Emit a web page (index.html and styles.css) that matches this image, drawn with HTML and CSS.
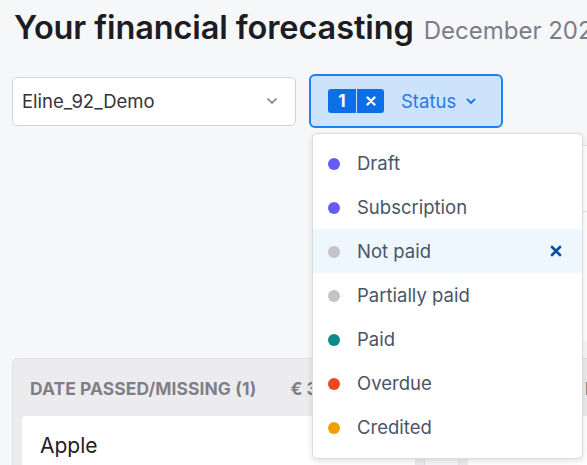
FILE: index.html
```html
<!DOCTYPE html>
<html lang="en">
<head>
<meta charset="utf-8">
<title>Financial forecasting</title>
<link rel="stylesheet" href="styles.css">
</head>
<body>
<div class="page">
  <header class="header">
    <h1 class="title">Your financial forecasting</h1>
    <span class="period">December 2023</span>
  </header>

  <div class="filters">
    <div class="select">
      <span class="select-text">Eline_92_Demo</span>
      <svg class="chev-gray" width="12" height="8" viewBox="0 0 12 8"><path d="M2 2l4 4 4-4" fill="none" stroke="#9a9aa3" stroke-width="2" stroke-linecap="round" stroke-linejoin="round"/></svg>
    </div>
    <div class="status-wrap">
      <button class="status-btn">
        <span class="badge"><span class="badge-num">1</span><span class="badge-x"><svg width="10" height="10" viewBox="0 0 10 10"><path d="M1.5 1.5l7 7M8.5 1.5l-7 7" stroke="#fff" stroke-width="2.4" stroke-linecap="round"/></svg></span></span>
        <span class="status-label">Status</span>
        <svg class="chev-blue" width="10" height="7" viewBox="0 0 10 7"><path d="M1.5 1.5l3.5 3.5 3.5-3.5" fill="none" stroke="#1f7ae8" stroke-width="2" stroke-linecap="round" stroke-linejoin="round"/></svg>
      </button>
      <ul class="menu">
        <li class="item"><span class="dot dot-purple"></span><span class="item-text">Draft</span></li>
        <li class="item"><span class="dot dot-purple"></span><span class="item-text">Subscription</span></li>
        <li class="item item-active"><span class="dot dot-gray"></span><span class="item-text">Not paid</span>
          <svg class="item-x" width="12" height="12" viewBox="0 0 12 12"><path d="M2 2l8 8M10 2l-8 8" stroke="#0b4ea2" stroke-width="2.6" stroke-linecap="round"/></svg>
        </li>
        <li class="item"><span class="dot dot-gray"></span><span class="item-text">Partially paid</span></li>
        <li class="item"><span class="dot dot-teal"></span><span class="item-text">Paid</span></li>
        <li class="item"><span class="dot dot-red"></span><span class="item-text">Overdue</span></li>
        <li class="item"><span class="dot dot-orange"></span><span class="item-text">Credited</span></li>
      </ul>
    </div>
  </div>

  <div class="summary-row">
    <div class="summary">
      <div class="summary-top"></div>
      <div class="summary-body"><span class="summary-mark"></span><span class="summary-bar"></span></div>
    </div>
  </div>

  <div class="board">
    <section class="column column-first">
      <div class="col-head">
        <span class="col-title">Date passed/missing (1)</span>
        <span class="col-amount">€ 3.450</span>
      </div>
      <div class="card"><span class="card-title">Apple</span></div>
    </section>
    <section class="column column-second">
      <div class="col-head col-head-second">
        <span class="col-title">M</span>
      </div>
      <div class="card"></div>
    </section>
  </div>
</div>
</body>
</html>
```
FILE: styles.css
```css
html, body {
  margin: 0;
  padding: 0;
  overflow: hidden;
}
body {
  background: #f6f7f9;
  font-family: Inter, "Noto Sans", sans-serif;
  color: #1c1d22;
  width: 587px;
  height: 465px;
}
.page {
  padding-left: 12px;
  width: 800px;
}
.header {
  display: flex;
  align-items: baseline;
  gap: 10px;
  padding-top: 9px;
  padding-left: 2px;
  height: 66px;
  box-sizing: border-box;
  white-space: nowrap;
}
.title {
  margin: 0;
  font-size: 32.5px;
  line-height: 38px;
  font-weight: 600;
  color: #1c1d22;
  letter-spacing: -0.1px;
}
.period {
  font-size: 24px;
  font-weight: 400;
  color: #7c7c87;
}
.filters {
  display: flex;
  align-items: center;
  gap: 13px;
  margin-top: 8px;
  height: 54px;
}
.select {
  width: 284px;
  height: 49px;
  box-sizing: border-box;
  background: #fff;
  border: 1px solid #d3d3d9;
  border-radius: 5px;
  display: flex;
  align-items: center;
  justify-content: space-between;
  padding: 0 17px 0 9px;
}
.select-text {
  font-size: 18.5px;
  color: #34343b;
}
.status-wrap {
  position: relative;
}
.status-btn {
  width: 194px;
  height: 54px;
  box-sizing: border-box;
  background: #cde3fc;
  border: 2px solid #1f80f0;
  border-radius: 6px;
  display: flex;
  align-items: center;
  padding: 0 0 0 17px;
  font-family: inherit;
  cursor: pointer;
}
.badge {
  display: flex;
  height: 24px;
  width: 56px;
  border-radius: 3px;
  background: #0d6fe6;
  overflow: hidden;
}
.badge-num {
  width: 28px;
  border-right: 1px solid #cde3fc;
  color: #fff;
  font-weight: 700;
  font-size: 17px;
  line-height: 24px;
  text-align: center;
}
.badge-x {
  flex: 1;
  display: flex;
  align-items: center;
  justify-content: center;
}
.status-label {
  margin-left: 17px;
  font-size: 18.5px;
  color: #2a7ae2;
}
.chev-blue {
  margin-left: 10px;
  margin-top: 1px;
}
.menu {
  position: absolute;
  top: 59px;
  left: 3px;
  width: 271px;
  height: 326px;
  box-sizing: border-box;
  margin: 0;
  padding: 7px 0 0;
  list-style: none;
  background: #fff;
  border: 1px solid #dcdce0;
  border-radius: 5px;
  box-shadow: 0 2px 6px rgba(0, 0, 0, 0.12);
  z-index: 10;
}
.item {
  height: 44px;
  display: flex;
  align-items: center;
  padding-left: 15px;
  padding-right: 20px;
}
.item-active {
  background: #eef6fe;
}
.dot {
  width: 12px;
  height: 12px;
  border-radius: 50%;
  flex: none;
  margin-top: 1px;
}
.dot-purple { background: #665cf5; }
.dot-gray { background: #c3c3c8; }
.dot-teal { background: #0c8a8c; }
.dot-red { background: #e9491d; }
.dot-orange { background: #f1a000; }
.item-text {
  margin-left: 17px;
  font-size: 18.5px;
  color: #4a5466;
  flex: 1;
}
.summary-row {
  display: flex;
  justify-content: flex-end;
  height: 230px;
  margin-top: 0;
  padding-right: 220px;
}
.summary {
  width: 60px;
  margin-top: 17px;
  height: 195px;
  background: #fff;
  border-top: 1px solid #e3e3e7;
}
.summary-top {
  height: 65px;
  border-bottom: 1px solid #e3e3e7;
}
.summary-body {
  display: flex;
  flex-direction: column;
  align-items: flex-start;
  padding-left: 44px;
}
.summary-mark {
  margin-top: 37px;
  width: 3px;
  height: 2px;
  background: #9a9aa3;
}
.summary-bar {
  margin-top: 24px;
  width: 3px;
  height: 14px;
  background: #a5a5ad;
}
.board {
  display: flex;
  gap: 33px;
  align-items: flex-start;
}
.column {
  width: 413px;
  box-sizing: border-box;
  background: #ececef;
  border: 1px solid #e1e1e5;
  border-radius: 6px;
  padding: 0 9px;
  height: 140px;
  flex: none;
}
.col-head {
  display: flex;
  align-items: center;
  gap: 34px;
  height: 57px;
  padding-left: 8px;
  padding-top: 1px;
  box-sizing: border-box;
  white-space: nowrap;
}
.col-head-second {
  padding-left: 117px;
}
.col-title {
  font-size: 17.4px;
  font-weight: 700;
  text-transform: uppercase;
  color: #7f7f88;
  letter-spacing: 0.1px;
}
.col-amount {
  font-size: 17.4px;
  font-weight: 700;
  color: #7f7f88;
}
.card {
  background: #fff;
  border-radius: 4px;
  height: 80px;
  padding: 17px 0 0 18px;
  box-sizing: border-box;
}
.card-title {
  font-size: 21px;
  color: #1f2024;
}
```
